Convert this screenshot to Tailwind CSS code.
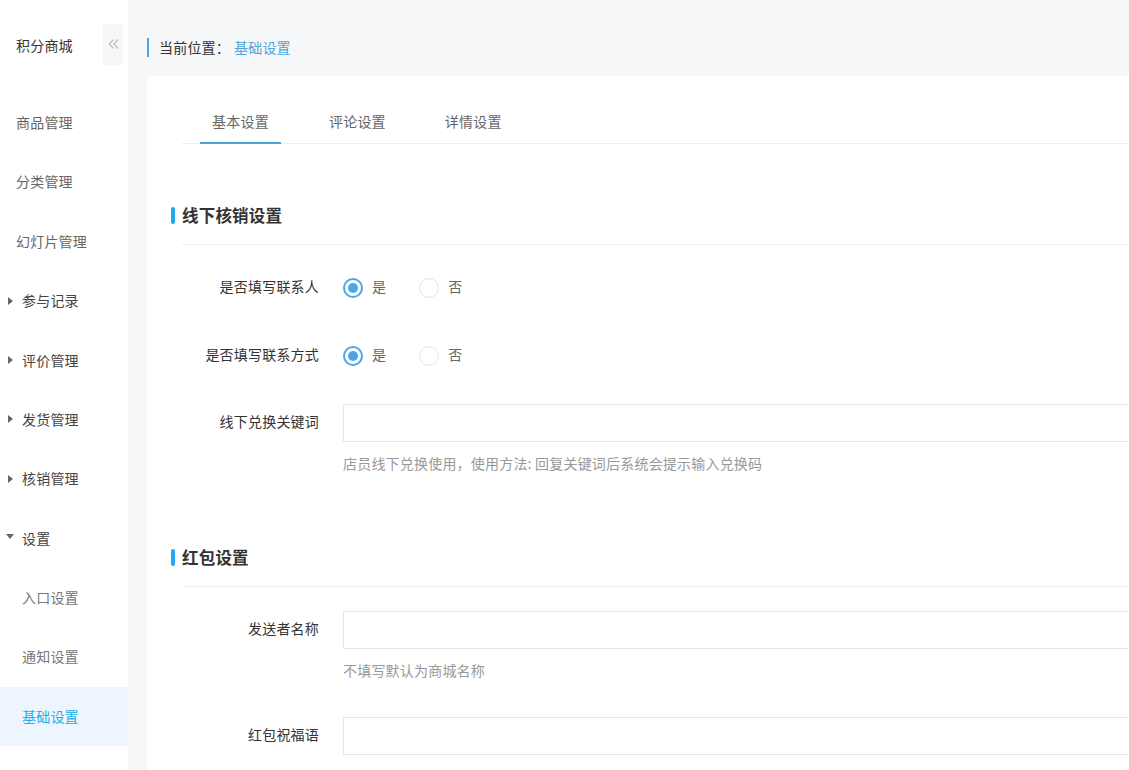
<!DOCTYPE html>
<html lang="zh">
<head>
<meta charset="utf-8">
<script src="https://cdn.jsdelivr.net/npm/@tailwindcss/browser@4"></script>
<title>基础设置</title>
</head>
<body class="m-0 overflow-hidden">
<div class="flex h-[770px] w-[1129px] overflow-hidden bg-[#f5f7f9] font-['Noto_Sans_CJK_SC','Liberation_Sans',sans-serif] text-[14px] tracking-[0.2px]">
  <aside class="w-[128px] h-full shrink-0 bg-white overflow-hidden text-[#666]">
    <div class="h-[92.8px] relative">
      <span class="absolute left-4 top-[35px] leading-5 text-[#333]">积分商城</span>
      <div class="absolute left-[103px] top-6 w-5 h-[41px] bg-[#f5f7f9] flex items-center justify-center pb-[1px] pl-[1px]">
        <svg width="10" height="10" viewBox="0 0 10 10" fill="none" stroke="#a8aeb6" stroke-width="1.1"><path d="M4.5 0.5 L0.5 5 L4.5 9.5 M9 0.5 L5 5 L9 9.5"/></svg>
      </div>
    </div>
    <nav class="flex flex-col">
      <div class="h-[59.4px] pl-4 flex items-center">商品管理</div>
      <div class="h-[59.4px] pl-4 flex items-center">分类管理</div>
      <div class="h-[59.4px] pl-4 flex items-center">幻灯片管理</div>
      <div class="h-[59.4px] pl-2 flex items-center text-[#444]"><span class="w-0 h-0 border-y-[4px] border-y-transparent border-l-[5px] border-l-[#666] mr-[9px]"></span>参与记录</div>
      <div class="h-[59.4px] pl-2 flex items-center text-[#444]"><span class="w-0 h-0 border-y-[4px] border-y-transparent border-l-[5px] border-l-[#666] mr-[9px]"></span>评价管理</div>
      <div class="h-[59.4px] pl-2 flex items-center text-[#444]"><span class="w-0 h-0 border-y-[4px] border-y-transparent border-l-[5px] border-l-[#666] mr-[9px]"></span>发货管理</div>
      <div class="h-[59.4px] pl-2 flex items-center text-[#444]"><span class="w-0 h-0 border-y-[4px] border-y-transparent border-l-[5px] border-l-[#666] mr-[9px]"></span>核销管理</div>
      <div class="h-[59.4px] pl-[6px] flex items-center text-[#444]"><span class="w-0 h-0 border-x-[4px] border-x-transparent border-t-[5px] border-t-[#666] mr-2 -mt-[3px]"></span>设置</div>
      <div class="h-[59.4px] pl-[22px] flex items-center text-[#777]">入口设置</div>
      <div class="h-[59.4px] pl-[22px] pb-[1px] flex items-center text-[#777]">通知设置</div>
      <div class="h-[59.4px] pl-[22px] flex items-center bg-[#edf6fe] text-[#29aee8]">基础设置</div>
    </nav>
  </aside>
  <main class="flex-1 min-w-0 pl-[19px]">
    <div class="h-[76px] pt-[38px]">
      <div class="flex items-center h-[19px] border-l-2 border-[#4ba6dc] pl-[10px] text-[#333]">当前位置：<span class="ml-1 text-[#4ba6dc]">基础设置</span></div>
    </div>
    <div class="bg-white h-[700px] pl-[35px]">
      <div class="flex h-[68px] border-b border-[#eceef0] text-[#666]">
        <div class="w-[81px] flex items-end justify-center pb-[11px] h-[68px] border-b-2 border-[#4ba6dc] ml-[18px] leading-5">基本设置</div>
        <div class="ml-[48px] pt-[35px] leading-5">评论设置</div>
        <div class="ml-[59px] pt-[35px] leading-5">详情设置</div>
      </div>
      <section class="relative">
        <span class="absolute -left-[11px] top-[63px] w-1 h-[17px] rounded-full bg-[#1eaaf0]"></span>
        <h2 class="h-[101px] pt-[59px] text-[16.5px] leading-6 font-bold text-[#333] border-b border-[#eceef0]">线下核销设置</h2>
        <div class="flex items-center mt-6 h-[38px]">
          <label class="w-[137px] pb-1 text-right text-[#333]">是否填写联系人</label>
          <div class="ml-6 flex items-center text-[#666]"><span class="w-5 h-5 rounded-full border-2 border-[#4ba6e8] flex items-center justify-center"><span class="w-[10px] h-[10px] rounded-full bg-[#4ba6e8]"></span></span><span class="ml-[9px] pb-1">是</span><span class="ml-[33px] w-5 h-5 rounded-full border border-[#e2e4e6]"></span><span class="ml-[9px] pb-1">否</span></div>
        </div>
        <div class="flex items-center mt-[30px] h-[38px]">
          <label class="w-[137px] pb-1 text-right text-[#333]">是否填写联系方式</label>
          <div class="ml-6 flex items-center text-[#666]"><span class="w-5 h-5 rounded-full border-2 border-[#4ba6e8] flex items-center justify-center"><span class="w-[10px] h-[10px] rounded-full bg-[#4ba6e8]"></span></span><span class="ml-[9px] pb-1">是</span><span class="ml-[33px] w-5 h-5 rounded-full border border-[#e2e4e6]"></span><span class="ml-[9px] pb-1">否</span></div>
        </div>
        <div class="flex items-center mt-[29px] h-[38px]">
          <label class="w-[137px] pb-1 text-right text-[#333]">线下兑换关键词</label>
          <input class="ml-6 h-[38px] flex-1 -mr-4 border border-[#e5e6e8] bg-white">
        </div>
        <p class="ml-[161px] mt-[11px] leading-5 text-[#999]">店员线下兑换使用，使用方法: 回复关键词后系统会提示输入兑换码</p>
      </section>
      <section class="relative">
        <span class="absolute -left-[11px] top-[76px] w-1 h-[17px] rounded-full bg-[#1eaaf0]"></span>
        <h2 class="h-[114px] pt-[72px] text-[16.5px] leading-6 font-bold text-[#333] border-b border-[#eceef0]">红包设置</h2>
        <div class="flex items-center mt-6 h-[38px]">
          <label class="w-[137px] pb-1 text-right text-[#333]">发送者名称</label>
          <input class="ml-6 h-[38px] flex-1 -mr-4 border border-[#e5e6e8] bg-white">
        </div>
        <p class="ml-[161px] mt-[11px] leading-5 text-[#999]">不填写默认为商城名称</p>
        <div class="flex items-center mt-[37px] h-[38px]">
          <label class="w-[137px] pb-1 text-right text-[#333]">红包祝福语</label>
          <input class="ml-6 h-[38px] flex-1 -mr-4 border border-[#e5e6e8] bg-white">
        </div>
      </section>
    </div>
  </main>
</div>
</body>
</html>
